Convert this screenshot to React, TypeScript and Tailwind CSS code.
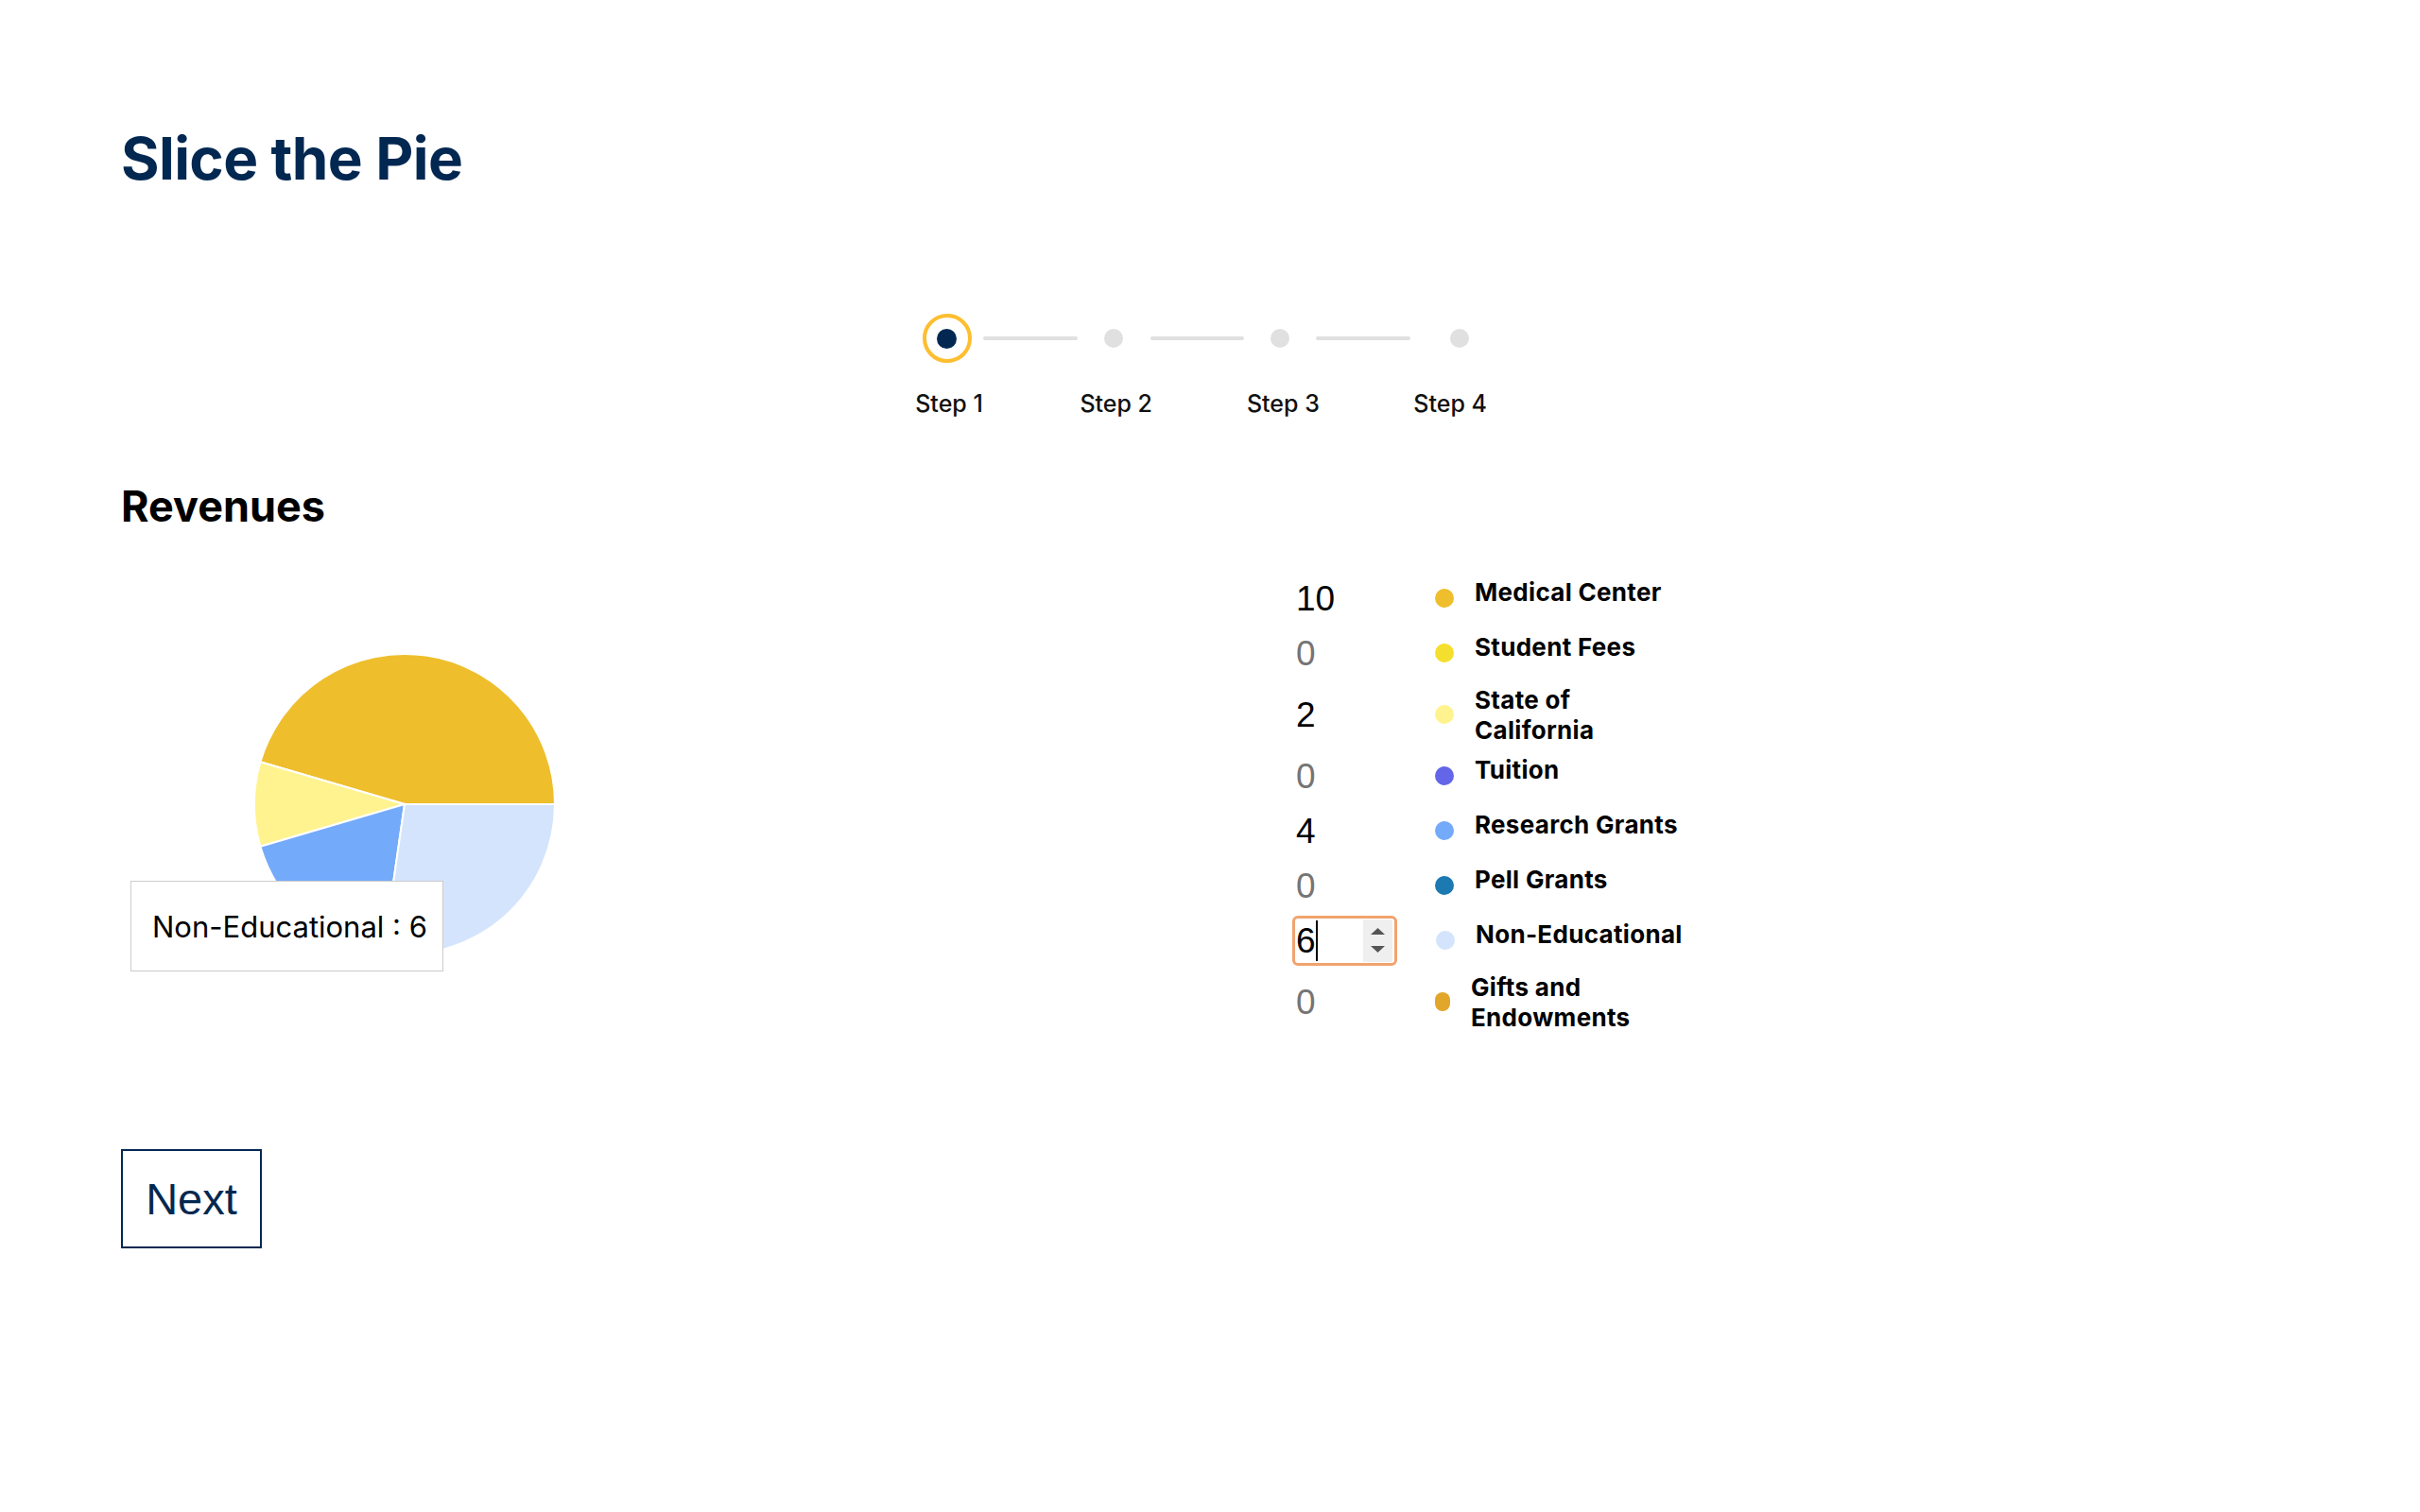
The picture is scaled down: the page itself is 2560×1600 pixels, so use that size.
import React from "react";

type Slice = { name: string; value: number; color: string };

const slices: Slice[] = [
  { name: "Medical Center", value: 10, color: "#EEBE2C" },
  { name: "Student Fees", value: 0, color: "#F5DF2E" },
  { name: "State of California", value: 2, color: "#FFF38F" },
  { name: "Tuition", value: 0, color: "#6366E8" },
  { name: "Research Grants", value: 4, color: "#74AAFA" },
  { name: "Pell Grants", value: 0, color: "#1D79B1" },
  { name: "Non-Educational", value: 6, color: "#D4E4FC" },
  { name: "Gifts and Endowments", value: 0, color: "#E2A62A" },
];

function arcPath(cx: number, cy: number, r: number, a0: number, a1: number) {
  const rad = (d: number) => (d * Math.PI) / 180;
  const x0 = cx + r * Math.cos(rad(a0));
  const y0 = cy - r * Math.sin(rad(a0));
  const x1 = cx + r * Math.cos(rad(a1));
  const y1 = cy - r * Math.sin(rad(a1));
  const large = a1 - a0 > 180 ? 1 : 0;
  return `M${cx},${cy} L${x0.toFixed(2)},${y0.toFixed(2)} A${r},${r} 0 ${large} 0 ${x1.toFixed(2)},${y1.toFixed(2)} Z`;
}

function Pie() {
  const total = slices.reduce((s, x) => s + x.value, 0);
  let acc = 0;
  const paths = slices
    .filter((s) => s.value > 0)
    .map((s) => {
      const a0 = (acc / total) * 360;
      acc += s.value;
      const a1 = (acc / total) * 360;
      return <path key={s.name} d={arcPath(160, 160, 159, a0, a1)} fill={s.color} stroke="#ffffff" strokeWidth={2} />;
    });
  return (
    <svg width={320} height={320} viewBox="0 0 320 320">
      {paths}
    </svg>
  );
}

function GrayDot() {
  return <div className="h-[20px] w-[20px] shrink-0 rounded-full bg-[#e0e0e0]" />;
}

function Line({ w }: { w: string }) {
  return <div className={"h-[4px] shrink-0 rounded-full bg-[#e0e0e0] " + w} />;
}

function Stepper() {
  const labels = ["Step 1", "Step 2", "Step 3", "Step 4"];
  return (
    <div className="ml-[787.7px] mt-[133px]">
      <div className="ml-[60.3px] flex h-[52px] items-center">
        <div className="flex h-[52px] w-[52px] shrink-0 items-center justify-center rounded-full border-[4px] border-[#FDBE2F]">
          <div className="h-[21px] w-[21px] rounded-full bg-[#022851]" />
        </div>
        <div className="ml-[12px] mr-[28px]">
          <Line w="w-[100px]" />
        </div>
        <GrayDot />
        <div className="ml-[29px] mr-[28px]">
          <Line w="w-[99px]" />
        </div>
        <GrayDot />
        <div className="ml-[28px] mr-[42px]">
          <Line w="w-[100px]" />
        </div>
        <GrayDot />
      </div>
      <div className="mt-[31px] flex">
        {labels.map((l) => (
          <div key={l} className="w-[176.7px] shrink-0 text-center text-[25px] font-medium leading-none text-[#111]">
            {l}
          </div>
        ))}
      </div>
    </div>
  );
}

function NumberCell({ value }: { value: number }) {
  return (
    <div className="flex h-[53px] w-[110px] shrink-0 items-center pl-[4px]">
      <span
        className={
          "font-['Liberation_Sans',Arial,sans-serif] text-[37px] leading-none " +
          (value > 0 ? "text-black" : "text-[#757575]")
        }
      >
        {value}
      </span>
    </div>
  );
}

function FocusedCell({ value }: { value: number }) {
  return (
    <div className="flex h-[53px] w-[111px] shrink-0 items-center rounded-[6px] border-[3px] border-[#F2A36E] bg-white">
      <span className="pl-[1px] font-['Liberation_Sans',Arial,sans-serif] text-[37px] leading-none text-black">{value}</span>
      <span className="h-[43px] w-[2px] bg-black" />
      <div className="ml-auto mr-[2px] flex h-[45px] w-[31px] flex-col items-center justify-center gap-[12px] bg-[#efefef]">
        <svg width="15" height="7" viewBox="0 0 15 7">
          <polygon points="7.5,0 15,7 0,7" fill="#555555" />
        </svg>
        <svg width="15" height="7" viewBox="0 0 15 7">
          <polygon points="0,0 15,0 7.5,7" fill="#555555" />
        </svg>
      </div>
    </div>
  );
}

type Row = { s: Slice; lines: string[]; focused?: boolean; narrowDot?: boolean };

const rows: Row[] = [
  { s: slices[0], lines: ["Medical Center"] },
  { s: slices[1], lines: ["Student Fees"] },
  { s: slices[2], lines: ["State of", "California"] },
  { s: slices[3], lines: ["Tuition"] },
  { s: slices[4], lines: ["Research Grants"] },
  { s: slices[5], lines: ["Pell Grants"] },
  { s: slices[6], lines: ["Non-Educational"], focused: true },
  { s: slices[7], lines: ["Gifts and", "Endowments"], narrowDot: true },
];

function Legend() {
  return (
    <div className="mt-[95px] flex flex-col">
      {rows.map((r) => {
        const two = r.lines.length > 1;
        return (
          <div key={r.s.name} className={"flex items-center " + (two ? "h-[72px]" : "h-[58px]")}>
            {r.focused ? <FocusedCell value={r.s.value} /> : <NumberCell value={r.s.value} />}
            <div
              className={"ml-[41px] h-[20px] shrink-0 rounded-full " + (r.narrowDot ? "w-[16px]" : "w-[20px]")}
              style={{ backgroundColor: r.s.color }}
            />
            <div
              className={
                "ml-[22px] self-start text-[26px] font-bold leading-[32px] tracking-[0.012em] text-black " +
                (two ? "mt-[5px]" : "mt-[6.5px]")
              }
            >
              {r.lines.map((l, i) => (
                <div key={i}>{l}</div>
              ))}
            </div>
          </div>
        );
      })}
    </div>
  );
}

export default function App() {
  return (
    <div className="min-h-screen bg-white pl-[128px] pt-[137px] font-['Inter',sans-serif]">
      <h1 className="text-[62px] font-bold leading-none tracking-[-0.01em] text-[#022851]">Slice the Pie</h1>
      <Stepper />
      <div className="mt-[69.4px] flex">
        <div className="w-[1239px] shrink-0">
          <h2 className="text-[45px] font-bold leading-[54px] text-black">Revenues</h2>
          <div className="relative ml-[140px] mt-[128px] h-[320px] w-[320px]">
            <Pie />
            <div className="absolute left-[-130px] top-[241px] flex h-[96px] w-[331px] items-center border border-[#cccccc] bg-white pl-[22px]">
              <span className="text-[31px] leading-none text-black">Non-Educational : 6</span>
            </div>
          </div>
        </div>
        <Legend />
      </div>
      <button className="mt-[120px] flex h-[105px] w-[149px] items-center justify-center border-[2px] border-[#022851] bg-white font-['Liberation_Sans',Arial,sans-serif] text-[47px] text-[#022851]">
        Next
      </button>
    </div>
  );
}
